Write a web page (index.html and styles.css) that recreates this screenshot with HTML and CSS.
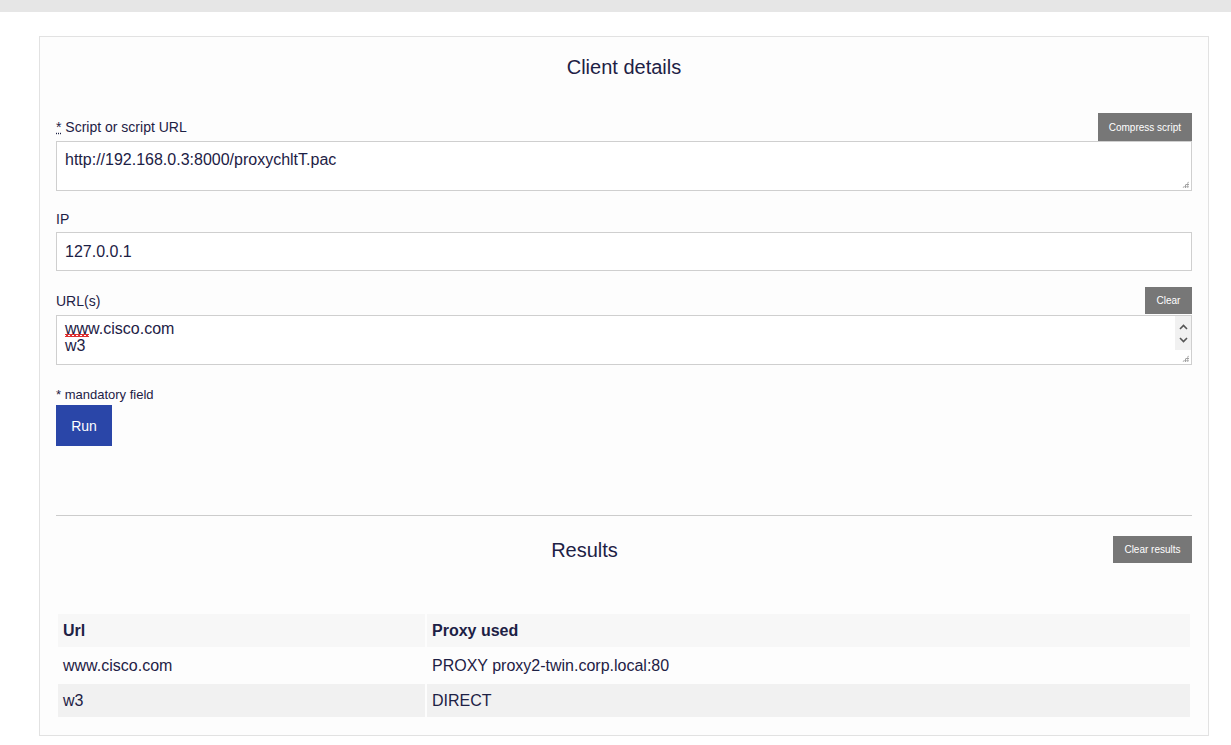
FILE: index.html
```html
<!DOCTYPE html>
<html lang="en">
<head>
<meta charset="utf-8">
<title>PAC tester</title>
<link rel="stylesheet" href="styles.css">
</head>
<body>
<div class="topbar"></div>
<div class="card">
  <h2 class="title">Client details</h2>

  <div class="field-head">
    <label class="label"><span class="req">*</span> Script or script URL</label>
    <button class="btn-gray">Compress script</button>
  </div>
  <div class="area-wrap">
    <textarea class="area script-area">http://192.168.0.3:8000/proxychltT.pac</textarea>
    <span class="grip"></span>
  </div>

  <div class="field-head plain">
    <label class="label">IP</label>
  </div>
  <input class="ip-input" type="text" value="127.0.0.1">

  <div class="field-head url-head">
    <label class="label">URL(s)</label>
    <button class="btn-gray clear">Clear</button>
  </div>
  <div class="area-wrap url-wrap">
    <textarea class="area url-area">www.cisco.com
w3</textarea>
    <span class="squiggle"></span>
    <span class="scroll-arrows">
      <svg width="9" height="6" viewBox="0 0 9 6"><path d="M1 5 L4.5 1.5 L8 5" fill="none" stroke="#555" stroke-width="1.6"/></svg>
      <svg width="9" height="6" viewBox="0 0 9 6"><path d="M1 1 L4.5 4.5 L8 1" fill="none" stroke="#555" stroke-width="1.6"/></svg>
    </span>
    <span class="grip"></span>
  </div>

  <p class="mandatory">* mandatory field</p>
  <button class="btn-run">Run</button>

  <hr class="divider">

  <div class="results-head">
    <h2 class="title results-title">Results</h2>
    <button class="btn-gray clear-results">Clear results</button>
  </div>

  <table class="results">
    <thead>
      <tr><th class="col-url">Url</th><th>Proxy used</th></tr>
    </thead>
    <tbody>
      <tr><td>www.cisco.com</td><td>PROXY proxy2-twin.corp.local:80</td></tr>
      <tr class="alt"><td>w3</td><td>DIRECT</td></tr>
    </tbody>
  </table>
</div>
</body>
</html>
```
FILE: styles.css
```css
* { box-sizing: border-box; }
html, body { margin: 0; padding: 0; background: #ffffff; }
body {
  font-family: "Liberation Sans", Arial, sans-serif;
  color: #1d2145;
}
.topbar {
  height: 12px;
  background: #e6e6e6;
}
.card {
  margin: 24px 0 0 39px;
  width: 1170px;
  height: 700px;
  border: 1px solid #e2e2e2;
  background: #fdfdfd;
  padding: 18px 16px 0 16px;
}
.title {
  margin: 0;
  font-weight: normal;
  font-size: 20px;
  line-height: 24px;
  text-align: center;
  color: #1d2145;
}
.field-head {
  display: flex;
  align-items: center;
  justify-content: space-between;
  height: 28px;
  margin-top: 34px;
}
.field-head.plain {
  margin-top: 20px;
  height: 16px;
  margin-bottom: 5px;
}
.field-head.url-head {
  margin-top: 16px;
  height: 27px;
}
.label {
  font-size: 14px;
  line-height: 16px;
  color: #1d2145;
}
.req {
  text-decoration: underline dotted;
}
.btn-gray {
  border: 0;
  background: #777777;
  color: #ffffff;
  font-family: "Liberation Sans", Arial, sans-serif;
  font-size: 10px;
  height: 28px;
  padding: 0 11px;
  cursor: pointer;
}
.btn-gray.clear {
  height: 27px;
  width: 47px;
  padding: 0;
}
.area-wrap {
  position: relative;
}
.area {
  display: block;
  width: 100%;
  height: 50px;
  border: 1px solid #cfcfcf;
  background: #ffffff;
  font-family: "Liberation Sans", Arial, sans-serif;
  font-size: 16px;
  color: #1d2145;
  margin: 0;
  resize: none;
  outline: none;
}
.script-area {
  padding: 9px 8px 7px;
  line-height: 18px;
}
.grip {
  position: absolute;
  right: 3px;
  bottom: 3px;
  width: 7px;
  height: 7px;
  background:
    radial-gradient(circle, #a0a0a0 0.9px, transparent 1.1px) 0 0 / 2.33px 2.33px;
  clip-path: polygon(100% 0, 100% 100%, 0 100%);
  pointer-events: none;
}
.ip-input {
  display: block;
  width: 100%;
  height: 39px;
  border: 1px solid #cfcfcf;
  background: #ffffff;
  font-family: "Liberation Sans", Arial, sans-serif;
  font-size: 16px;
  color: #1d2145;
  padding: 0 8px;
  margin: 0;
  outline: none;
}
.url-wrap {
  margin-top: 1px;
}
.url-area {
  padding: 4px 24px 3px 8px;
  line-height: 17px;
  overflow: hidden;
}
.squiggle {
  position: absolute;
  left: 9px;
  top: 19px;
  width: 24px;
  height: 3px;
  background-image: linear-gradient(45deg, transparent 35%, #e03030 35%, #e03030 60%, transparent 60%),
                    linear-gradient(-45deg, transparent 35%, #e03030 35%, #e03030 60%, transparent 60%);
  background-size: 4px 3px;
  pointer-events: none;
}
.scroll-arrows {
  position: absolute;
  right: 1px;
  top: 1px;
  width: 16px;
  height: 34px;
  background: #f1f1f1;
  display: flex;
  flex-direction: column;
  align-items: center;
  justify-content: space-around;
  padding: 4px 0;
}
.mandatory {
  margin: 22px 0 0;
  font-size: 13px;
  line-height: 15px;
  color: #1d2145;
}
.btn-run {
  display: block;
  margin-top: 3px;
  width: 56px;
  height: 41px;
  border: 0;
  background: #2a46a8;
  color: #ffffff;
  font-family: "Liberation Sans", Arial, sans-serif;
  font-size: 14px;
  cursor: pointer;
}
.divider {
  margin: 69px 0 0;
  border: 0;
  border-top: 1px solid #cccccc;
  height: 0;
}
.results-head {
  display: flex;
  align-items: center;
  margin-top: 20px;
  height: 27px;
}
.results-title {
  flex: 1;
}
.btn-gray.clear-results {
  height: 27px;
  width: 79px;
  padding: 0;
}
.results {
  margin-top: 49px;
  width: 100%;
  border-collapse: separate;
  border-spacing: 2px;
  font-size: 16px;
  color: #1d2145;
}
.results th, .results td {
  text-align: left;
  padding: 0 5px;
  height: 33px;
}
.results th {
  background: #f7f7f7;
  font-weight: bold;
}
.results .col-url {
  width: 367px;
}
.results tr.alt td {
  background: #f1f1f1;
}
```
